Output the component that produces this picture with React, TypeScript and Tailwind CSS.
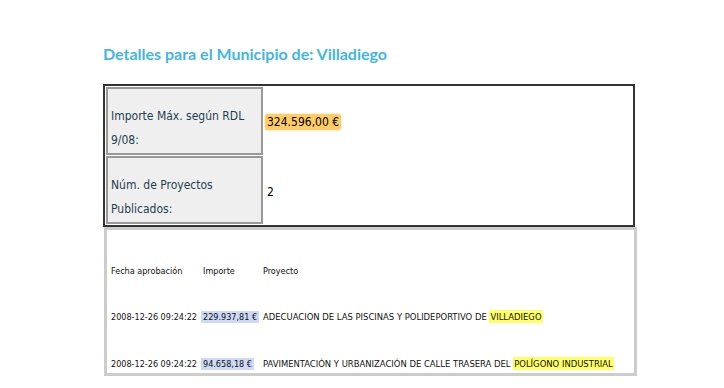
const tahoma = { fontFamily: '"DejaVu Sans Condensed", "DejaVu Sans", sans-serif' };

const proyectos = [
  {
    fecha: '2008-12-26 09:24:22',
    importe: '229.937,81 €',
    texto: 'ADECUACION DE LAS PISCINAS Y POLIDEPORTIVO DE ',
    marca: 'VILLADIEGO',
  },
  {
    fecha: '2008-12-26 09:24:22',
    importe: '94.658,18 €',
    texto: 'PAVIMENTACIÓN Y URBANIZACIÓN DE CALLE TRASERA DEL ',
    marca: 'POLÍGONO INDUSTRIAL',
  },
];

const App = () => {
  return (
    <div className="w-[724px] h-[388px] bg-white overflow-hidden pl-[103px] pt-[44px]">
      <h2 className="text-[16px] leading-[20px] font-bold text-[#3fb7e2] font-['Lato',sans-serif]">
        Detalles para el Municipio de: Villadiego
      </h2>

      <div className="mt-[20px] w-[532px] border-2 border-[#333]" style={tahoma}>
        <table className="w-full border-separate border-spacing-[1px]">
          <tbody>
            <tr>
              <td className="w-[157px] h-[68px] bg-[#efefef] border-2 border-[#999] px-[3px] pt-[13px] text-[12px] leading-[24px] text-[#1d3f52] align-middle">
                Importe Máx. según RDL
                <br />
                9/08:
              </td>
              <td className="pl-[1px] pt-[2px] align-middle text-[12px]">
                <span className="inline-block bg-[#ffcc66] rounded-[3px] px-[2px] leading-[16px] text-black shadow-[0_0_2px_#ffcc66]">
                  324.596,00 €
                </span>
              </td>
            </tr>
            <tr>
              <td className="w-[157px] h-[68px] bg-[#efefef] border-2 border-[#999] px-[3px] pt-[13px] text-[12px] leading-[24px] text-[#1d3f52] align-middle">
                Núm. de Proyectos
                <br />
                Publicados:
              </td>
              <td className="pl-[3px] pt-[4px] align-middle text-[12px] text-black">2</td>
            </tr>
          </tbody>
        </table>
      </div>

      <div
        className="ml-[1px] w-[533px] border-[3px] border-[#cccccc] pl-[4px] pb-[3px] text-[9px] text-[#111] leading-[12px]"
        style={tahoma}
      >
        <div className="mt-[35px] flex h-[12px] items-center">
          <span className="w-[90px]">Fecha aprobación</span>
          <span className="w-[62px] pl-[2px]">Importe</span>
          <span>Proyecto</span>
        </div>
        {proyectos.map((p, i) => (
          <div key={i} className={`flex h-[13px] items-center ${i === 0 ? 'mt-[33px]' : 'mt-[34px]'}`}>
            <span className="w-[90px] whitespace-nowrap">{p.fecha}</span>
            <span className="w-[62px]">
              <span className="bg-[#cdd9f6] px-[2px] py-[1px] whitespace-nowrap">{p.importe}</span>
            </span>
            <span className="whitespace-nowrap text-[9.4px]">
              {p.texto}
              <span className="bg-[#ffff66] px-[1px] py-[1px]">{p.marca}</span>
            </span>
          </div>
        ))}
      </div>
    </div>
  );
};

export default App;
